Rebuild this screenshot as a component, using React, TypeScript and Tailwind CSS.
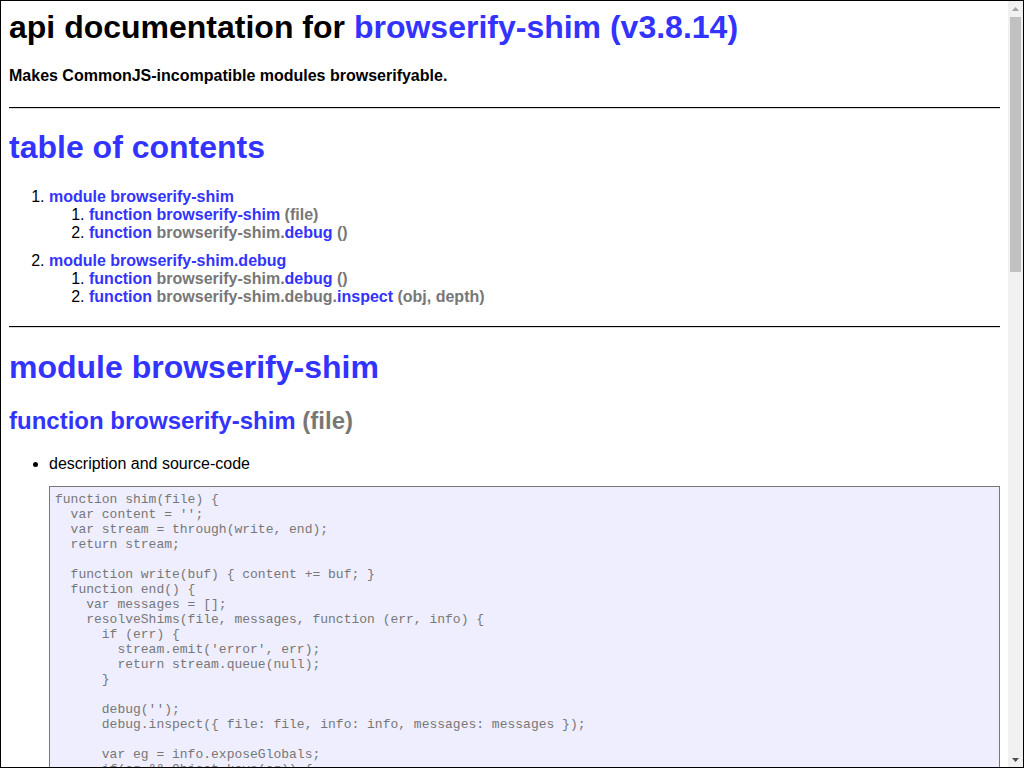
const shimCode = `function shim(file) {
  var content = '';
  var stream = through(write, end);
  return stream;

  function write(buf) { content += buf; }
  function end() {
    var messages = [];
    resolveShims(file, messages, function (err, info) {
      if (err) {
        stream.emit('error', err);
        return stream.queue(null);
      }

      debug('');
      debug.inspect({ file: file, info: info, messages: messages });

      var eg = info.exposeGlobals;
      if(eg && Object.keys(eg)) {
        content = expose(eg, content);
      }

      if (info.shim) {
        // at this point we know that the module is shimmed
        var transformed = wrap(content, info.shim, info.browserAliases);
        stream.queue(transformed);
      } else {
        stream.queue(content);
      }

      stream.queue(null);
    });
  }
}`;

const debugCode = `function debug() {
  if (!enabled) return;
  var args = [].slice.call(arguments);
  args[0] = prefix + args[0];
  log.apply(null, args);
}`;

const inspectCode = `function inspect(obj, depth) {
  if (!enabled) return;
  debug(util.inspect(obj, false, depth || 5, true));
}`;

const exampleCode = `...
var browserify = require('browserify');
var b = browserify('./entry.js');
b.transform('browserify-shim');
b.bundle().pipe(process.stdout);
...`;

const Hr = ({ className }: { className: string }) => (
  <div
    className={`border-t border-b border-t-black border-b-[#d9d9d9] ${className}`}
  />
);

const Sig = ({ children }: { children: React.ReactNode }) => (
  <span className="text-[#777]">{children}</span>
);

const A = ({ children }: { children: React.ReactNode }) => (
  <a href="#" className="text-[#33f] font-bold no-underline">
    {children}
  </a>
);

const Pre = ({ code }: { code: string }) => (
  <pre className="mt-[13px] mb-[13px] border border-[#777] bg-[#eef] text-[#777] p-[5px] font-['Liberation_Mono',monospace] text-[13px] leading-[15px] whitespace-pre overflow-hidden">
    {code}
  </pre>
);

const Section = ({
  title,
  sig,
  code,
  example,
}: {
  title: React.ReactNode;
  sig: string;
  code: string;
  example?: string;
}) => (
  <div>
    <h2 className="text-[24px] leading-[28px] font-bold mt-[21px] mb-[20px]">
      {title} <Sig>{sig}</Sig>
    </h2>
    <ul className="list-disc pl-[40px]">
      <li>
        description and source-code
        <Pre code={code} />
      </li>
      {example && (
        <li>
          example usage
          <Pre code={example} />
        </li>
      )}
    </ul>
  </div>
);

// headless shots hide native scrollbars, so draw the classic one
const ScrollBar = () => (
  <div className="w-[15px] h-full bg-[#f1f1f1] flex flex-col items-center shrink-0">
    <div className="h-[15px] w-full flex items-center justify-center">
      <svg width="7" height="4" viewBox="0 0 7 4">
        <path d="M3.5 0 L7 4 L0 4 Z" fill="#a3a3a3" />
      </svg>
    </div>
    <div className="w-[11px] h-[255px] mt-[1px] bg-[#c1c1c1]" />
    <div className="flex-1" />
    <div className="h-[15px] w-full flex items-center justify-center">
      <svg width="7" height="4" viewBox="0 0 7 4">
        <path d="M0 0 L7 0 L3.5 4 Z" fill="#505050" />
      </svg>
    </div>
  </div>
);

export default function App() {
  return (
    <div className="h-screen border border-black bg-white text-black font-['Liberation_Sans',Arial,sans-serif] flex overflow-hidden">
      <div className="flex-1 min-w-0 h-full overflow-hidden px-[8px] pt-[8px] pb-[8px] text-[16px] leading-[18px]">
        <h1 className="text-[32px] leading-[37px] font-bold">
          api documentation for <A>browserify-shim (v3.8.14)</A>
        </h1>
        <h4 className="font-bold mt-[21px]">
          Makes CommonJS-incompatible modules browserifyable.
        </h4>

        <Hr className="mt-[22px] mb-[20px]" />

        <h1 className="text-[32px] leading-[37px] font-bold">
          <A>table of contents</A>
        </h1>

        <ol className="list-decimal pl-[40px] mt-[22px] font-bold">
          <li className="mb-[10px] marker:font-normal">
            <A>module browserify-shim</A>
            <ol className="list-decimal pl-[40px]">
              <li className="marker:font-normal">
                <A>function browserify-shim</A> <Sig>(file)</Sig>
              </li>
              <li className="marker:font-normal">
                <A>function</A> <Sig>browserify-shim.</Sig>
                <A>debug</A> <Sig>()</Sig>
              </li>
            </ol>
          </li>
          <li className="marker:font-normal">
            <A>module browserify-shim.debug</A>
            <ol className="list-decimal pl-[40px]">
              <li className="marker:font-normal">
                <A>function</A> <Sig>browserify-shim.</Sig>
                <A>debug</A> <Sig>()</Sig>
              </li>
              <li className="marker:font-normal">
                <A>function</A> <Sig>browserify-shim.debug.</Sig>
                <A>inspect</A> <Sig>(obj, depth)</Sig>
              </li>
            </ol>
          </li>
        </ol>

        <Hr className="mt-[20px] mb-[21px]" />

        <h1 className="text-[32px] leading-[37px] font-bold">
          <A>module browserify-shim</A>
        </h1>
        <Section
          title={<A>function browserify-shim</A>}
          sig="(file)"
          code={shimCode}
          example={exampleCode}
        />
        <Section
          title={
            <>
              <A>function</A> <Sig>browserify-shim.</Sig>
              <A>debug</A>
            </>
          }
          sig="()"
          code={debugCode}
        />

        <Hr className="my-[21px]" />

        <h1 className="text-[32px] leading-[37px] font-bold">
          <A>module browserify-shim.debug</A>
        </h1>
        <Section
          title={
            <>
              <A>function</A> <Sig>browserify-shim.</Sig>
              <A>debug</A>
            </>
          }
          sig="()"
          code={debugCode}
        />
        <Section
          title={
            <>
              <A>function</A> <Sig>browserify-shim.debug.</Sig>
              <A>inspect</A>
            </>
          }
          sig="(obj, depth)"
          code={inspectCode}
        />
      </div>
      <ScrollBar />
    </div>
  );
}
